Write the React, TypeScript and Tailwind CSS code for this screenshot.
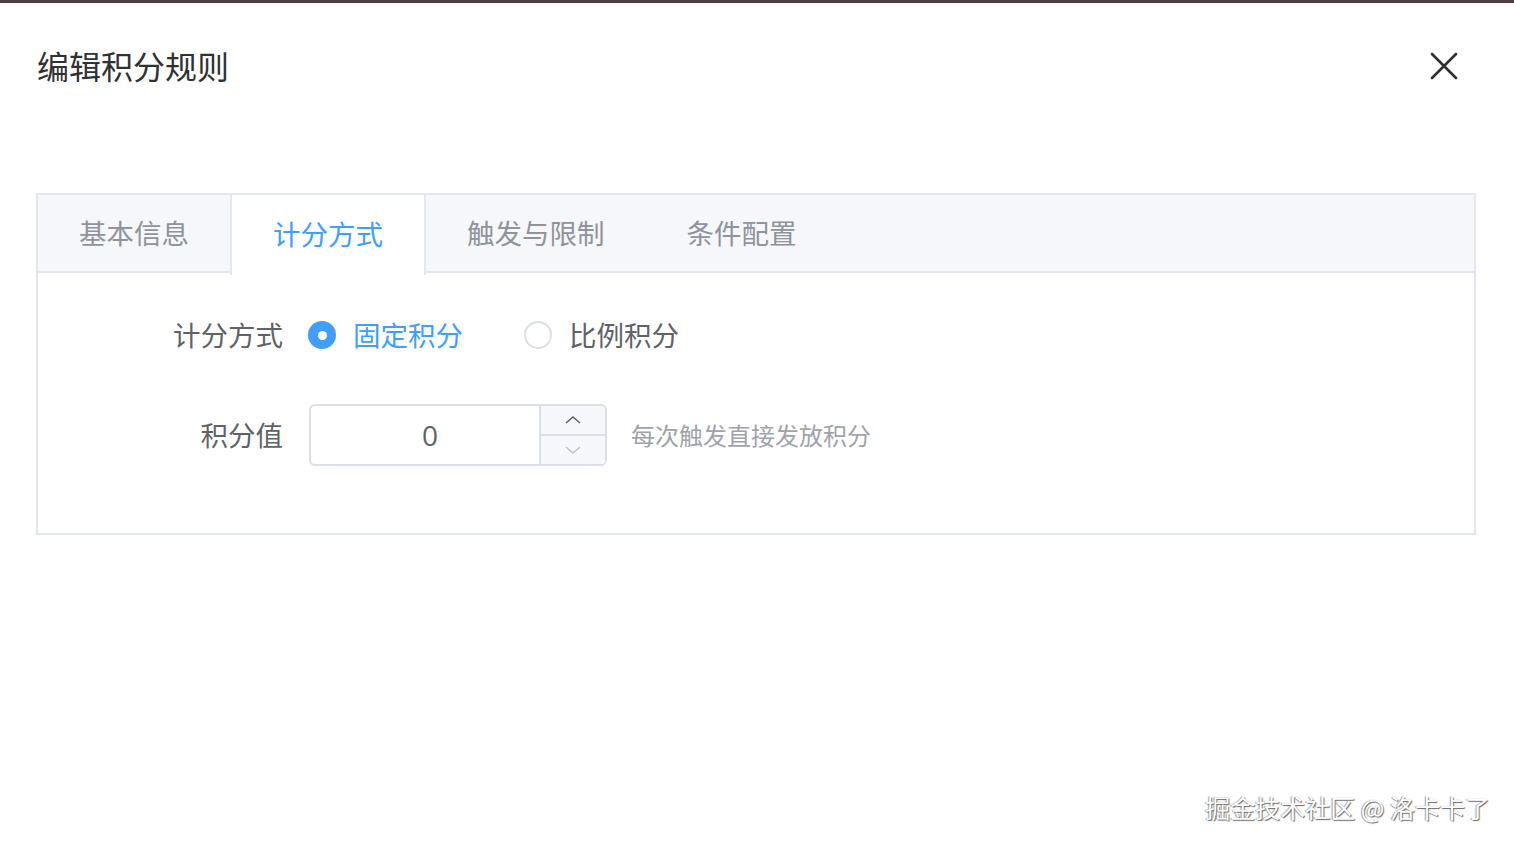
import { useState } from 'react';

const tabs = ['基本信息', '计分方式', '触发与限制', '条件配置'];

const cjk = { fontFamily: '"Noto Sans CJK SC", "Noto Sans", sans-serif' };

const Radio = ({ checked, label, onClick }: { checked: boolean; label: string; onClick: () => void }) => (
  <label onClick={onClick} className="flex items-center cursor-pointer">
    {checked ? (
      <span className="w-[28px] h-[28px] rounded-full bg-[#409eff] flex items-center justify-center">
        <span className="w-[9px] h-[9px] rounded-full bg-white" />
      </span>
    ) : (
      <span className="w-[28px] h-[28px] rounded-full border-2 border-[#dcdfe6] bg-white" />
    )}
    <span className={`ml-[17px] text-[27.5px] leading-none ${checked ? 'text-[#409eff]' : 'text-[#606266]'}`}>{label}</span>
  </label>
);

export default function App() {
  const [active, setActive] = useState(1);
  const [mode, setMode] = useState('fixed');
  const [value, setValue] = useState(0);

  return (
    <div className="relative w-[1514px] h-[848px] bg-white overflow-hidden" style={cjk}>
      <div className="h-[3px] bg-[#4d3c44]" />

      {/* Header */}
      <div className="flex items-center justify-between pt-[38px] pl-[37px] pr-[56px]">
        <h1 className="text-[32px] leading-[48px] text-[#303133] font-normal">编辑积分规则</h1>
        <svg width="28" height="28" viewBox="0 0 28 28" className="text-[#303133] mt-[2px]">
          <path d="M2 2 L26 26 M26 2 L2 26" stroke="currentColor" strokeWidth="2.6" strokeLinecap="round" />
        </svg>
      </div>

      {/* Tabs card */}
      <div className="mt-[104px] ml-[36px] w-[1440px] border-2 border-[#e4e7ed]">
        <div className="flex h-[78px] bg-[#f5f7fa] border-b-2 border-[#e4e7ed]">
          {tabs.map((t, i) => (
            <div
              key={t}
              onClick={() => setActive(i)}
              className={`px-[41px] flex items-center text-[27.5px] cursor-pointer ${
                i === active
                  ? 'bg-white text-[#409eff] border-x-2 border-[#e4e7ed] -mb-[2px] h-[80px] pb-[2px]'
                  : 'text-[#909399]'
              }`}
            >
              {t}
            </div>
          ))}
        </div>

        <div className="pt-[31px] pb-[67px]">
          <div className="flex items-center h-[62px]">
            <div className="w-[245px] text-right text-[27.5px] text-[#606266]">计分方式</div>
            <div className="flex items-center ml-[25px] gap-[61px]">
              <Radio checked={mode === 'fixed'} label="固定积分" onClick={() => setMode('fixed')} />
              <Radio checked={mode === 'ratio'} label="比例积分" onClick={() => setMode('ratio')} />
            </div>
          </div>

          <div className="flex items-center h-[62px] mt-[38px]">
            <div className="w-[245px] text-right text-[27.5px] text-[#606266]">积分值</div>
            <div className="ml-[26px] flex w-[298px] h-[62px] border-2 border-[#dcdfe6] rounded-[6px] overflow-hidden">
              <div className="flex-1 flex items-center justify-center pl-[10px] text-[28px] text-[#606266]" style={{ fontFamily: '"Open Sans", "Noto Sans", sans-serif' }}>
                {value}
              </div>
              <div className="w-[66px] flex flex-col bg-[#f5f7fa] border-l-2 border-[#dcdfe6]">
                <button onClick={() => setValue(value + 1)} className="flex-1 flex items-center justify-center border-b-2 border-[#dcdfe6]">
                  <svg width="18" height="10" viewBox="0 0 18 10">
                    <path d="M2 8 L9 2 L16 8" fill="none" stroke="#606266" strokeWidth="1.6" />
                  </svg>
                </button>
                <button onClick={() => setValue(value - 1)} className="flex-1 flex items-center justify-center">
                  <svg width="18" height="10" viewBox="0 0 18 10">
                    <path d="M2 2 L9 8 L16 2" fill="none" stroke="#c0c4cc" strokeWidth="1.6" />
                  </svg>
                </button>
              </div>
            </div>
            <span className="ml-[24px] text-[24px] text-[#a0a3a9]">每次触发直接发放积分</span>
          </div>
        </div>
      </div>

      {/* Watermark */}
      <div
        className="absolute right-[24px] bottom-[22px] text-[25px] text-white"
        style={{ textShadow: '1px 1px 1px #666, -1px 0 1px #999' }}
      >
        掘金技术社区 @ 洛卡卡了
      </div>
    </div>
  );
}
